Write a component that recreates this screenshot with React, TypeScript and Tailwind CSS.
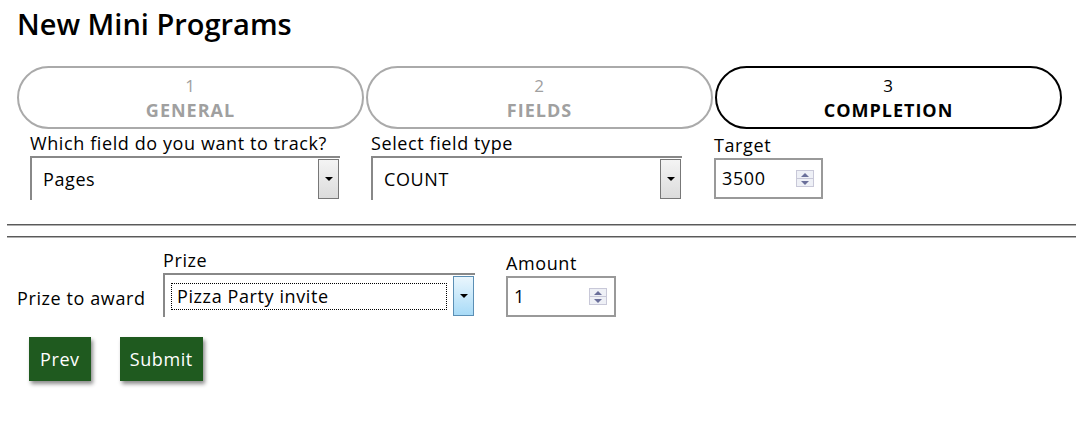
import React from 'react'

const font = { fontFamily: '"Open Sans", "Noto Sans", "DejaVu Sans", sans-serif' }

function Step({ n, label, active }: { n: number; label: string; active?: boolean }) {
  return (
    <div
      className={`flex h-[63px] w-[347px] flex-col items-center justify-center rounded-full border-2 leading-[24px] ${
        active ? 'border-black text-black' : 'border-[#aaaaaa] text-[#a0a0a0]'
      }`}
    >
      <span className="text-[17px]">{n}</span>
      <span className="text-[18px] font-bold tracking-[1px]">{label}</span>
    </div>
  )
}

function Arrow({ focused }: { focused?: boolean }) {
  return (
    <div
      className={`flex w-[21px] items-center justify-center border ${
        focused
          ? 'border-[#5b8fb5] bg-gradient-to-b from-[#eaf6fd] to-[#a8dbf7]'
          : 'border-[#777777] bg-gradient-to-b from-[#f4f4f4] to-[#dcdcdc]'
      }`}
    >
      <div className="h-0 w-0 border-x-[4px] border-t-[4px] border-x-transparent border-t-black" />
    </div>
  )
}

function Select({ value, width, focused }: { value: string; width: string; focused?: boolean }) {
  return (
    <div className={`flex h-[44px] ${width} border-l-2 border-t-2 border-[#888888] bg-white py-[1px] pr-[1px]`}>
      <div className="flex flex-1 items-center px-[6px]">
        {focused ? (
          <div className="flex h-[27px] w-full items-center border border-dotted border-black px-[5px] text-[18px] text-black">
            {value}
          </div>
        ) : (
          <div className="flex h-full w-full items-center px-[5px] text-[18px] text-black">{value}</div>
        )}
      </div>
      <Arrow focused={focused} />
    </div>
  )
}

function Spin() {
  return (
    <div className="flex w-[18px] flex-col border border-[#c8c8d8]">
      <div className="flex h-[8px] items-center justify-center border-b border-[#c8c8d8] bg-[#eef0f6]">
        <div className="h-0 w-0 border-x-[4px] border-b-[4px] border-x-transparent border-b-[#6a6f9a]" />
      </div>
      <div className="flex h-[7px] items-center justify-center bg-[#eef0f6]">
        <div className="h-0 w-0 border-x-[4px] border-t-[4px] border-x-transparent border-t-[#6a6f9a]" />
      </div>
    </div>
  )
}

function NumberBox({ value, width }: { value: string; width: string }) {
  return (
    <div className={`flex h-[41px] ${width} items-center justify-between border-2 border-[#999999] bg-white pl-[6px] pr-[7px]`}>
      <span className="text-[18px] text-black">{value}</span>
      <Spin />
    </div>
  )
}

export default function App() {
  return (
    <div className="h-[427px] w-[1076px] overflow-hidden bg-white tracking-[0.6px] text-black" style={font}>
      <h1 className="pl-[17px] pt-[4px] text-[29px] font-semibold leading-[40px] tracking-normal">New Mini Programs</h1>

      <div className="mt-[22px] flex gap-[2px] pl-[17px]">
        <Step n={1} label="GENERAL" />
        <Step n={2} label="FIELDS" />
        <Step n={3} label="COMPLETION" active />
      </div>

      <div className="flex pl-[30px] pt-[2px]">
        <div className="flex w-[341px] flex-col">
          <label className="text-[18px] leading-[25px]">Which field do you want to track?</label>
          <Select value="Pages" width="w-[310px]" />
        </div>
        <div className="flex w-[343px] flex-col">
          <label className="text-[18px] leading-[25px]">Select field type</label>
          <Select value="COUNT" width="w-[311px]" />
        </div>
        <div className="flex flex-col pt-[2px]">
          <label className="text-[18px] leading-[25px]">Target</label>
          <NumberBox value="3500" width="w-[109px]" />
        </div>
      </div>

      <div className="ml-[7px] mt-[24px] h-[2px] border-t border-[#5a5a5a] bg-[#b0b0b0]" />
      <div className="ml-[7px] mt-[10px] h-[2px] border-t border-[#5a5a5a] bg-[#b0b0b0]" />

      <div className="mt-[10px] flex items-end pl-[17px]">
        <span className="mb-[6px] w-[146px] text-[18px] leading-[25px]">Prize to award</span>
        <div className="flex w-[343px] flex-col">
          <label className="text-[18px] leading-[25px]">Prize</label>
          <Select value="Pizza Party invite" width="w-[312px]" focused />
        </div>
        <div className="flex flex-col">
          <label className="text-[18px] leading-[25px]">Amount</label>
          <NumberBox value="1" width="w-[110px]" />
        </div>
      </div>

      <div className="mt-[20px] flex gap-[29px] pl-[29px]">
        <button className="h-[44px] bg-[#1f5a1f] px-[11px] text-[18px] text-white shadow-[2px_3px_4px_rgba(0,0,0,0.45)]">
          Prev
        </button>
        <button className="h-[44px] bg-[#1f5a1f] px-[10px] text-[18px] text-white shadow-[2px_3px_4px_rgba(0,0,0,0.45)]">
          Submit
        </button>
      </div>
    </div>
  )
}
